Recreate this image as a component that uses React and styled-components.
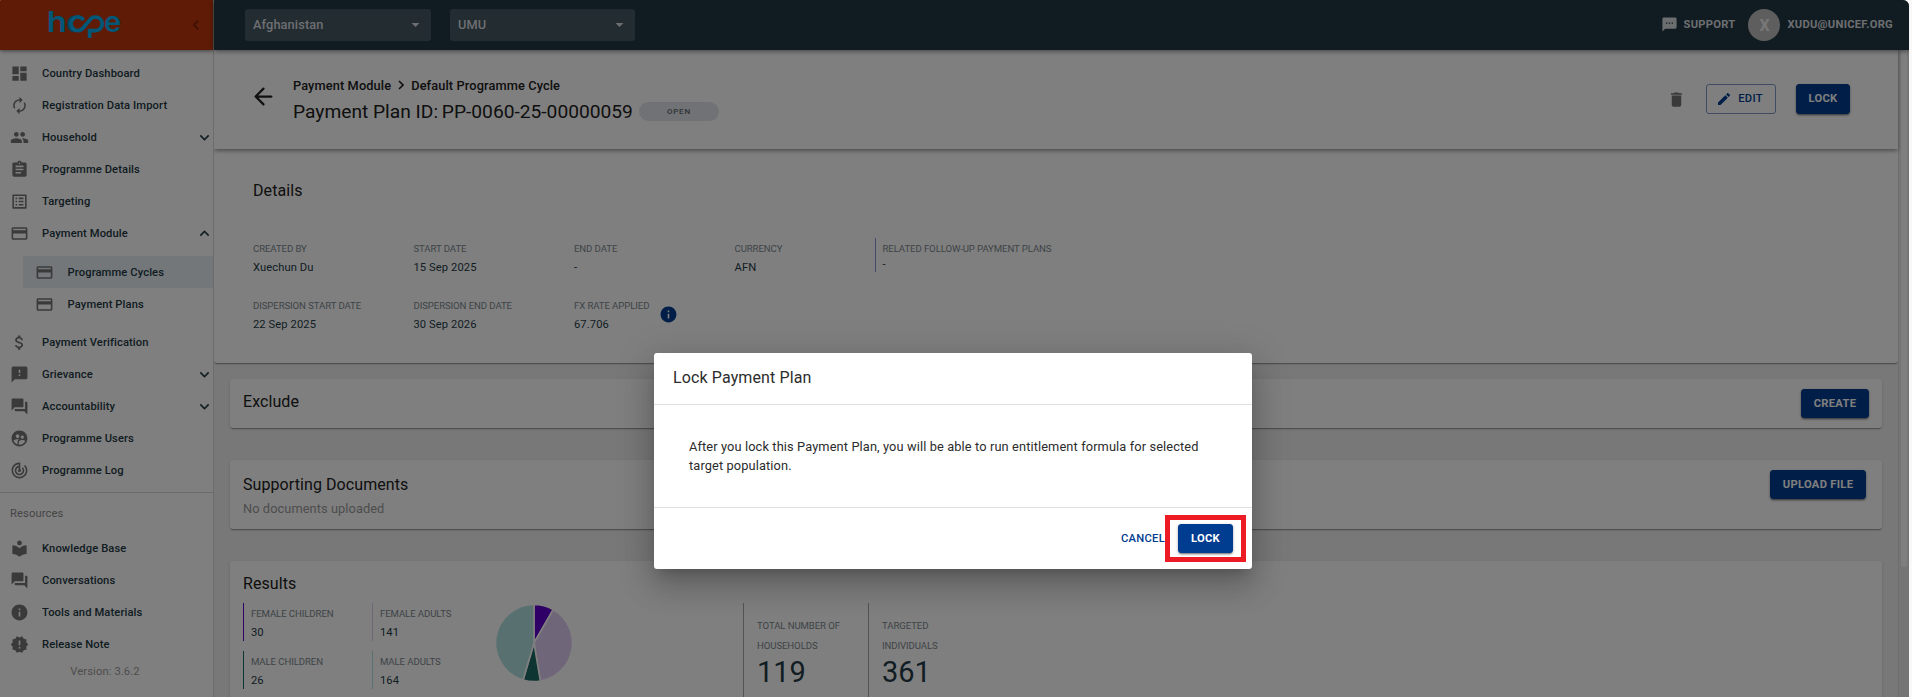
import React from 'react';
import styled, { createGlobalStyle, css } from 'styled-components';
import {
  MdDashboard, MdAutorenew, MdPeople, MdAssignment, MdListAlt, MdPayment, MdAttachMoney,
  MdFeedback, MdForum, MdSupervisedUserCircle, MdTrackChanges, MdLocalLibrary, MdInfo,
  MdNewReleases, MdTextsms, MdDelete, MdEdit, MdExpandMore, MdExpandLess, MdArrowDropDown,
  MdChevronLeft,
} from 'react-icons/md';

const GlobalStyle = createGlobalStyle`
  *, *::before, *::after { box-sizing: border-box; }
  body {
    margin: 0;
    background: #f8f8f8;
    font-family: Roboto, "Liberation Sans", sans-serif;
    color: #253b46;
    overflow: hidden;
  }
  svg { display: block; flex: none; }
`;

const shadow = '0 2px 1px -1px rgba(0,0,0,.2), 0 1px 1px rgba(0,0,0,.14), 0 1px 3px rgba(0,0,0,.12)';

const Shell = styled.div`
  position: relative;
  display: grid;
  grid-template-columns: 214px 1fr;
  width: 1909px;
  height: 697px;
  border-radius: 1px 6px 0 0;
  overflow: hidden;
  background: #f0f0f0;
`;

const Sidebar = styled.aside`
  background: #fff;
  border-right: 1px solid #d8d8d8;
  height: 697px;
`;

const Brand = styled.div`
  display: flex;
  align-items: center;
  justify-content: space-between;
  height: 50px;
  width: 213px;
  padding: 0 7px 0 46px;
  background: #bf360c;
  box-shadow: 0 1px 4px rgba(0,0,0,.5);
  color: #7a2008;
`;

const Nav = styled.nav`
  padding-top: 7px;
`;

const NavRow = styled.div`
  display: flex;
  align-items: center;
  height: 32px;
  padding: 0 0 0 10px;
  font-size: 11.2px;
  font-weight: 500;
  letter-spacing: .1px;
  color: #233944;
  > svg:first-child { color: #757575; margin-right: 13px; }
  > span { flex: 1; }
  > svg:last-child { color: #233944; margin-right: -1px; }
  ${(p) => p.$sub && css`
    margin-left: 23px;
    padding-left: 12px;
    background: ${p.$active ? '#e6eef5' : 'none'};
    > svg:first-child { margin-right: 13.6px; }
  `}
`;

const SubNav = styled.div`
  padding: 7px 0 6px;
`;

const Resources = styled.div`
  border-top: 1px solid #d5d5d5;
  margin-top: 6px;
`;

const ResourcesTitle = styled.div`
  padding-left: 10px;
  height: 39px;
  line-height: 41px;
  font-size: 11.2px;
  letter-spacing: .1px;
  color: #8a8a8a;
`;

const Version = styled.div`
  text-align: center;
  padding-right: 3px;
  line-height: 24px;
  font-size: 11.2px;
  letter-spacing: .1px;
  color: #9a9a9a;
`;

const Main = styled.div`
  min-width: 0;
`;

const TopBar = styled.header`
  position: relative;
  z-index: 1;
  display: flex;
  align-items: center;
  height: 50px;
  padding: 0 16px 0 31px;
  background: #233944;
  box-shadow: 0 1px 5px rgba(0,0,0,.5);
  color: #dadde0;
`;

const Select = styled.div`
  display: flex;
  align-items: center;
  justify-content: space-between;
  width: ${(p) => p.$w}px;
  height: 32px;
  margin-right: 19px;
  padding: 0 6px 1px 8px;
  border-radius: 3px;
  background: #465861;
  font-size: 12.8px;
  font-weight: 500;
  letter-spacing: .1px;
`;

const TopLink = styled.div`
  display: flex;
  align-items: center;
  gap: 6px;
  padding-bottom: 1px;
  font-size: 11.2px;
  font-weight: 700;
  letter-spacing: .25px;
`;

const Spacer = styled.div`
  flex: 1;
`;

const Avatar = styled.div`
  display: grid;
  place-items: center;
  width: 32px;
  height: 32px;
  margin: 0 7px 0 13px;
  border-radius: 50%;
  background: #bdbdbd;
  color: #f0f0f0;
  font-size: 16px;
  font-weight: 700;
`;

const Body = styled.div`
  display: flex;
  height: 647px;
  overflow: hidden;
`;

const Content = styled.main`
  width: 1684px;
`;

const ScrollTrack = styled.div`
  width: 11px;
  padding: 0 2px;
  background: #ebebeb;
  border-left: 1px solid #dcdcdc;
`;

const ScrollThumb = styled.div`
  height: 517px;
  border-radius: 0 0 3px 3px;
  background: #fff;
`;

const PageHeader = styled.section`
  position: relative;
  display: flex;
  height: 99px;
  padding: 26px 48px 0 36px;
  background: #fff;
  box-shadow: 0 2px 4px -1px rgba(0,0,0,.3), 0 2px 5px rgba(0,0,0,.2);
`;

const BackArrow = styled.div`
  margin: 7px 15px 0 0;
  color: #202020;
`;

const Heading = styled.div`
  flex: 1;
  padding-left: 1px;
  color: #202020;
`;

const Crumbs = styled.div`
  display: flex;
  align-items: center;
  gap: 7px;
  height: 18px;
  font-size: 12.8px;
  font-weight: 500;
  letter-spacing: .11px;
`;

const TitleRow = styled.div`
  display: flex;
  align-items: center;
  height: 34px;
  gap: 6px;
  font-size: 19.2px;
`;

const PlanId = styled.span`
  margin-left: -1px;
`;

const Chip = styled.span`
  display: grid;
  place-items: center;
  width: 80px;
  height: 19px;
  border-radius: 10px;
  background: #e0e5ea;
  color: #5c686e;
  font-size: 8px;
  font-weight: 500;
  letter-spacing: .8px;
`;

const Actions = styled.div`
  display: flex;
  align-items: center;
  height: 30px;
  margin-top: 8px;
  color: #757575;
`;

const Button = styled.button`
  display: flex;
  align-items: center;
  justify-content: center;
  gap: 6px;
  width: ${(p) => p.$w}px;
  height: ${(p) => p.$h || 29}px;
  padding: 0 ${(p) => (p.$outlined ? 3 : 0)}px 1px 0;
  border: 1px solid ${(p) => (p.$outlined ? '#7f99c6' : '#003c8f')};
  border-radius: 3px;
  background: ${(p) => (p.$outlined ? '#fff' : '#003c8f')};
  color: ${(p) => (p.$outlined ? '#003c8f' : '#fff')};
  box-shadow: ${(p) => (p.$outlined ? 'none' : '0 2px 2px -1px rgba(0,0,0,.4), 0 1px 3px rgba(0,0,0,.3)')};
  font: ${(p) => (p.$outlined ? 500 : 700)} 11.2px Roboto, sans-serif;
  letter-spacing: .3px;
  margin-left: ${(p) => p.$ml || 0}px;
`;

const Details = styled.section`
  height: 214px;
  padding: 32px 39px 0;
  margin-bottom: 16px;
  border-radius: 0 0 3px 3px;
  background: #fff;
  box-shadow: ${shadow};
`;

const DetailGrid = styled.div`
  display: grid;
  grid-template-columns: 160.5px 160.5px 160.5px 140px 1fr;
  grid-auto-rows: 57px;
  margin-top: 37px;
`;

const SectionTitle = styled.h2`
  margin: 0;
  padding-top: ${(p) => p.$pt || 0}px;
  font-size: 16px;
  font-weight: 400;
  line-height: 20px;
  letter-spacing: .08px;
  color: #202020;
`;

const Field = styled.div`
  display: flex;
  align-items: flex-start;
  ${(p) => p.$bar && css`
    height: ${p.$h || 38}px;
    padding-left: 7px;
    border-left: 1px solid ${p.$bar};
  `}
`;

const FieldText = styled.div`
  padding-top: 4px;
`;

const Label = styled.div`
  font-size: 9.6px;
  line-height: 13px;
  color: #7c888f;
  letter-spacing: -.09px;
`;

const Value = styled.div`
  margin-top: ${(p) => (p.$tight ? 2 : 5)}px;
  font-size: 11.2px;
  line-height: 16px;
  letter-spacing: .08px;
  color: #253b46;
`;

const InfoMark = styled.div`
  margin: 10px 0 0 10px;
  color: #003c8f;
`;

const Card = styled.section`
  display: flex;
  justify-content: space-between;
  align-items: flex-start;
  height: ${(p) => p.$h}px;
  margin: 0 16px ${(p) => p.$mb}px;
  padding: ${(p) => p.$pad};
  border-radius: 3px;
  background: #fff;
  box-shadow: ${shadow};
`;

const Muted = styled.div`
  margin-top: 6px;
  font-size: 12.8px;
  line-height: 16px;
  letter-spacing: .08px;
  color: #9a9a9a;
`;

const ResultsRow = styled.div`
  display: flex;
  margin-top: 9px;
`;

const GenderGrid = styled.div`
  display: grid;
  grid-template-columns: 129px 129px;
  grid-auto-rows: 48px;
`;

const PieWrap = styled.div`
  width: 249px;
  margin-left: -7px;
`;

const Total = styled.div`
  width: 125px;
  height: 110px;
  padding: 13px 13px 0;
  border-left: 1px solid #a8a8a8;
`;

const TotalLabel = styled.div`
  font-size: 9.6px;
  line-height: 20px;
  color: #7c888f;
  letter-spacing: -.09px;
`;

const TotalValue = styled.div`
  margin-top: 1px;
  font-size: 29px;
  line-height: 30px;
  color: #253b46;
`;

const Backdrop = styled.div`
  position: absolute;
  inset: 0;
  z-index: 2;
  display: flex;
  align-items: center;
  justify-content: center;
  padding: 225px 3px 0 0;
  background: rgba(0,0,0,.5);
`;

const Dialog = styled.div`
  width: 598px;
  height: 216px;
  border-radius: 3px;
  background: #fff;
  box-shadow: 0 9px 12px -6px rgba(0,0,0,.2), 0 19px 30px 2px rgba(0,0,0,.14), 0 7px 37px 6px rgba(0,0,0,.12);
  color: #2c2c2c;
`;

const DialogTitle = styled.h1`
  margin: 0;
  height: 52px;
  padding: 15px 19px 0;
  border-bottom: 1px solid #e0e0e0;
  font-size: 16px;
  font-weight: 400;
  line-height: 20px;
  letter-spacing: .12px;
`;

const DialogText = styled.p`
  margin: 0;
  height: 103px;
  padding: 32px 35px 0;
  border-bottom: 1px solid #e0e0e0;
  font-size: 12.8px;
  line-height: 19px;
  letter-spacing: .12px;
`;

const DialogActions = styled.div`
  display: flex;
  justify-content: flex-end;
  align-items: center;
  padding: 7px 6px 0 0;
`;

const Cancel = styled.span`
  color: #003c8f;
  font-size: 11.2px;
  font-weight: 500;
  letter-spacing: .3px;
`;

const Highlight = styled.div`
  display: grid;
  place-items: center;
  width: 81px;
  height: 47px;
  border: 5px solid #ed1c24;
`;

function Logo() {
  return (
    <svg width="78" height="50" viewBox="0 -8 78 50">
      <g fill="#00aeef" fontFamily="Inter, sans-serif" fontWeight="600" fontSize="29">
        <text x="0.8" y="24" textLength="20" lengthAdjust="spacingAndGlyphs">h</text>
        <text x="58" y="24">e</text>
      </g>
      <path d="M28 9.8A6.6 6.6 0 0 0 28 22.2" fill="none" stroke="#0084b8" strokeWidth="5" />
      <g fill="none" stroke="#00aeef" strokeWidth="3.8">
        <path d="M37.5 12.2A6.8 6.8 0 1 0 36.5 20.6L43.5 12.4A6.8 6.8 0 1 1 48.5 22.6H43" />
        <path d="M43.6 30V20.8" />
      </g>
    </svg>
  );
}

const slices = [
  { n: 30, c: '#5f02cf' },
  { n: 141, c: '#dfccf5' },
  { n: 26, c: '#1d6a64' },
  { n: 164, c: '#b1e3e0' },
];

function Pie() {
  const total = slices.reduce((s, x) => s + x.n, 0);
  let a = -Math.PI / 2;
  const r = 38.5;
  return (
    <svg width="80" height="80" viewBox="-40 -40 80 80">
      {slices.map(({ n, c }) => {
        const b = a + (n / total) * Math.PI * 2;
        const d = `M0 0L${r * Math.cos(a)} ${r * Math.sin(a)}A${r} ${r} 0 0 1 ${r * Math.cos(b)} ${r * Math.sin(b)}Z`;
        a = b;
        return <path key={c} d={d} fill={c} stroke="#fff" strokeWidth="1.6" />;
      })}
    </svg>
  );
}

const mainItems = [
  [MdDashboard, 'Country Dashboard'],
  [MdAutorenew, 'Registration Data Import'],
  [MdPeople, 'Household', MdExpandMore],
  [MdAssignment, 'Programme Details'],
  [MdListAlt, 'Targeting'],
  [MdPayment, 'Payment Module', MdExpandLess],
];
const moreItems = [
  [MdAttachMoney, 'Payment Verification'],
  [MdFeedback, 'Grievance', MdExpandMore],
  [MdForum, 'Accountability', MdExpandMore],
  [MdSupervisedUserCircle, 'Programme Users'],
  [MdTrackChanges, 'Programme Log'],
];
const resourceItems = [
  [MdLocalLibrary, 'Knowledge Base'],
  [MdForum, 'Conversations'],
  [MdInfo, 'Tools and Materials'],
  [MdNewReleases, 'Release Note'],
];

function NavList({ items }) {
  return items.map(([Icon, text, Arrow]) => (
    <NavRow key={text}>
      <Icon size={19} />
      <span>{text}</span>
      {Arrow && <Arrow size={19} />}
    </NavRow>
  ));
}

function Info({ label, value, bar, h, tight, mark }) {
  return (
    <Field $bar={bar} $h={h}>
      <FieldText>
        <Label>{label}</Label>
        <Value $tight={tight}>{value}</Value>
      </FieldText>
      {mark && <InfoMark><MdInfo size={19} /></InfoMark>}
    </Field>
  );
}

export default function App() {
  return (
    <>
      <GlobalStyle />
      <Shell>
        <Sidebar>
          <Brand><Logo /><MdChevronLeft size={20} /></Brand>
          <Nav>
            <NavList items={mainItems} />
            <SubNav>
              <NavRow $sub $active><MdPayment size={19} /><span>Programme Cycles</span></NavRow>
              <NavRow $sub><MdPayment size={19} /><span>Payment Plans</span></NavRow>
            </SubNav>
            <NavList items={moreItems} />
          </Nav>
          <Resources>
            <ResourcesTitle>Resources</ResourcesTitle>
            <NavList items={resourceItems} />
            <Version>Version: 3.6.2</Version>
          </Resources>
        </Sidebar>
        <Main>
          <TopBar>
            <Select $w={186}>Afghanistan<MdArrowDropDown size={19} /></Select>
            <Select $w={185}>UMU<MdArrowDropDown size={19} /></Select>
            <Spacer />
            <TopLink><MdTextsms size={17} />SUPPORT</TopLink>
            <Avatar>X</Avatar>
            <TopLink>XUDU@UNICEF.ORG</TopLink>
          </TopBar>
          <Body>
            <Content>
              <PageHeader>
                <BackArrow>
                  <svg width="27" height="27" viewBox="0 0 24 24" fill="none" stroke="currentColor" strokeWidth="2" strokeLinecap="round" strokeLinejoin="round"><path d="M19 12H5M12 5l-7 7 7 7" /></svg>
                </BackArrow>
                <Heading>
                  <Crumbs>
                    <span>Payment Module</span>
                    <svg width="6" height="10" viewBox="0 0 6 10" fill="none" stroke="currentColor" strokeWidth="1.6"><path d="M1 1l4 4-4 4" /></svg>
                    <span>Default Programme Cycle</span>
                  </Crumbs>
                  <TitleRow><span>Payment Plan ID: <PlanId>PP-0060-25-00000059</PlanId></span><Chip>OPEN</Chip></TitleRow>
                </Heading>
                <Actions>
                  <MdDelete size={19} />
                  <Button $outlined $w={70} $h={30} $ml={20}><MdEdit size={16} />EDIT</Button>
                  <Button $w={54} $h={30} $ml={20}>LOCK</Button>
                </Actions>
              </PageHeader>
              <Details>
                <SectionTitle>Details</SectionTitle>
                <DetailGrid>
                  <Info label="CREATED BY" value="Xuechun Du" />
                  <Info label="START DATE" value="15 Sep 2025" />
                  <Info label="END DATE" value="-" />
                  <Info label="CURRENCY" value="AFN" />
                  <Info label="RELATED FOLLOW-UP PAYMENT PLANS" value="-" tight bar="#8095c8" h={34} />
                  <Info label="DISPERSION START DATE" value="22 Sep 2025" />
                  <Info label="DISPERSION END DATE" value="30 Sep 2026" />
                  <Info label="FX RATE APPLIED" value="67.706" mark />
                </DetailGrid>
              </Details>
              <Card $h={49} $mb={32} $pad="10px 13px">
                <SectionTitle $pt={3}>Exclude</SectionTitle>
                <Button $w={68}>CREATE</Button>
              </Card>
              <Card $h={69} $mb={32} $pad="10px 16px 0 13px">
                <div>
                  <SectionTitle $pt={5}>Supporting Documents</SectionTitle>
                  <Muted>No documents uploaded</Muted>
                </div>
                <Button $w={96}>UPLOAD FILE</Button>
              </Card>
              <Card $h={200} $mb={0} $pad="13px">
                <div>
                  <SectionTitle>Results</SectionTitle>
                  <ResultsRow>
                    <GenderGrid>
                      <Info label="FEMALE CHILDREN" value="30" bar="#5f02cf" />
                      <Info label="FEMALE ADULTS" value="141" bar="#dfccf5" />
                      <Info label="MALE CHILDREN" value="26" bar="#1d6a64" />
                      <Info label="MALE ADULTS" value="164" bar="#b1e3e0" />
                    </GenderGrid>
                    <PieWrap><Pie /></PieWrap>
                    <Total><TotalLabel>TOTAL NUMBER OF<br />HOUSEHOLDS</TotalLabel><TotalValue>119</TotalValue></Total>
                    <Total><TotalLabel>TARGETED<br />INDIVIDUALS</TotalLabel><TotalValue>361</TotalValue></Total>
                  </ResultsRow>
                </div>
              </Card>
            </Content>
            <ScrollTrack><ScrollThumb /></ScrollTrack>
          </Body>
        </Main>
        <Backdrop>
          <Dialog>
            <DialogTitle>Lock Payment Plan</DialogTitle>
            <DialogText>After you lock this Payment Plan, you will be able to run entitlement formula for selected target population.</DialogText>
            <DialogActions>
              <Cancel>CANCEL</Cancel>
              <Highlight><Button $w={55}>LOCK</Button></Highlight>
            </DialogActions>
          </Dialog>
        </Backdrop>
      </Shell>
    </>
  );
}
